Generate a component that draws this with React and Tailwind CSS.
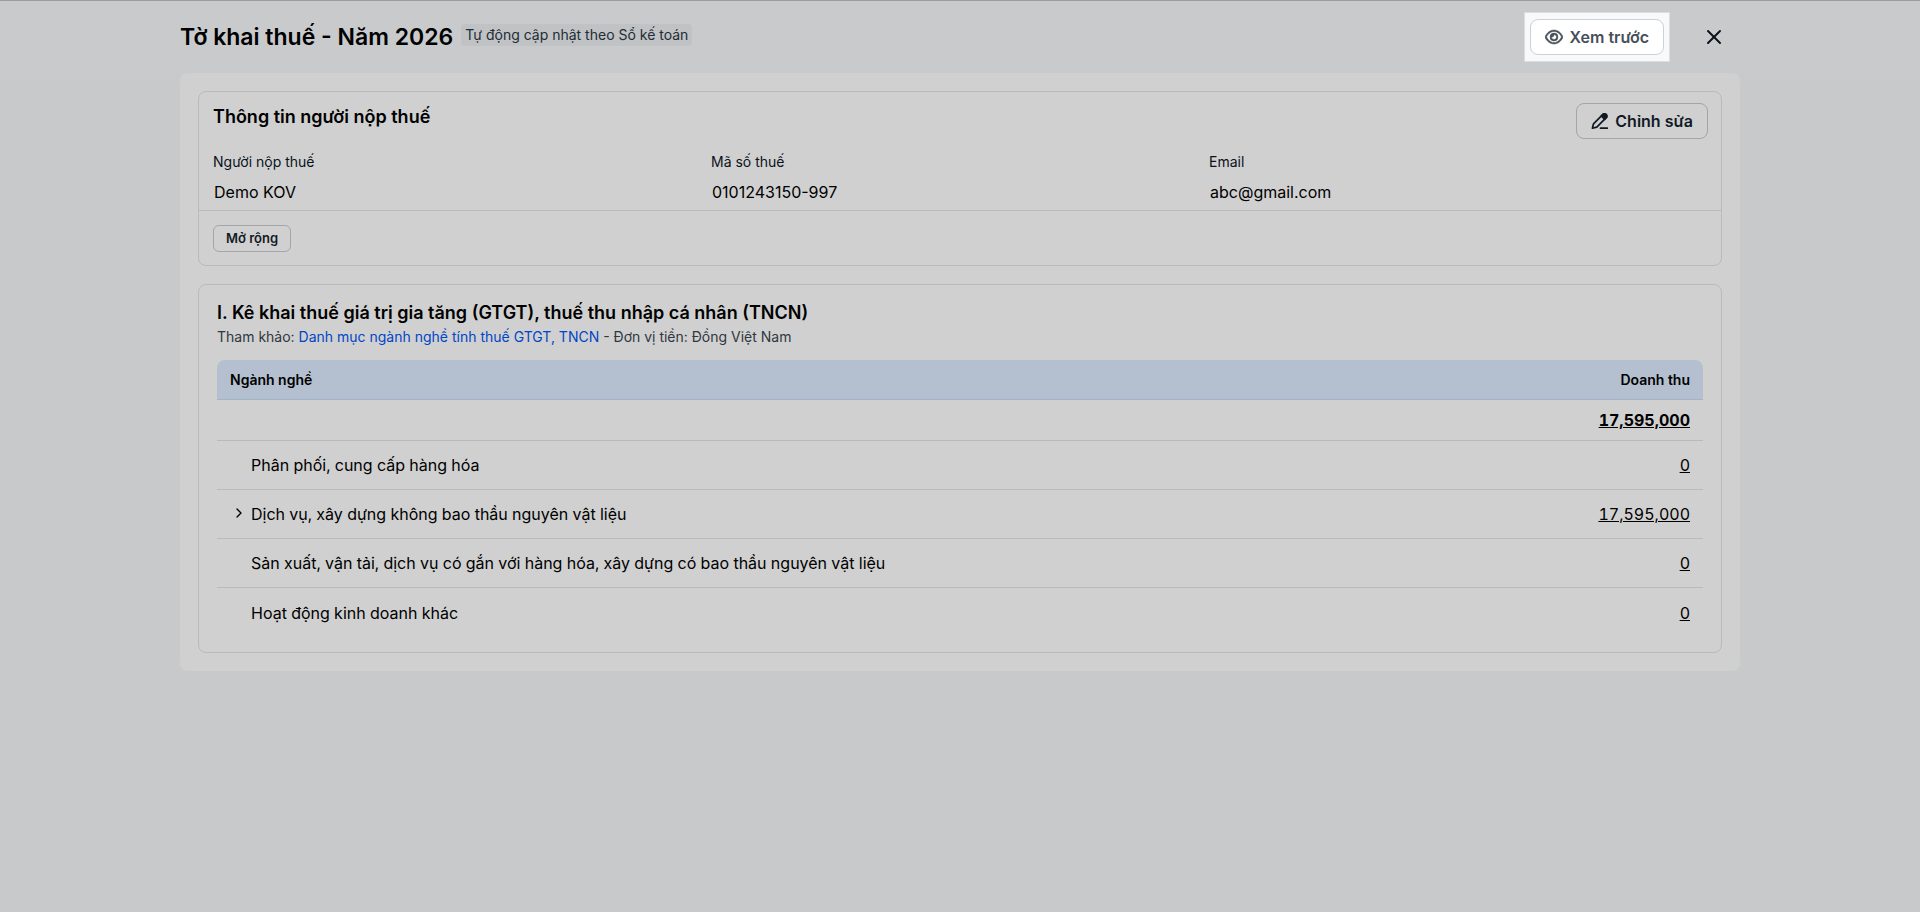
import { useState } from 'react';
import { X, ChevronRight } from 'lucide-react';
import { FaRegEye } from 'react-icons/fa6';

const taxpayer = [
  { id: 'name', label: 'Người nộp thuế', value: 'Demo KOV' },
  { id: 'taxCode', label: 'Mã số thuế', value: '0101243150-997' },
  { id: 'email', label: 'Email', value: 'abc@gmail.com' },
];

const rows = [
  { name: 'Phân phối, cung cấp hàng hóa', revenue: 0 },
  { name: 'Dịch vụ, xây dựng không bao thầu nguyên vật liệu', revenue: 17595000, expandable: true },
  { name: 'Sản xuất, vận tải, dịch vụ có gắn với hàng hóa, xây dựng có bao thầu nguyên vật liệu', revenue: 0 },
  { name: 'Hoạt động kinh doanh khác', revenue: 0 },
];

const format = (n) => n.toLocaleString('en-US');

function PenIcon() {
  return (
    <svg viewBox="0 0 18 18" className="size-[18px]" fill="none" stroke="currentColor" strokeWidth="1.7" strokeLinecap="round" strokeLinejoin="round">
      <path d="M1.400 16.200L2.500 11.800L11.900 2.400A2.100 2.100 0 0 1 14.900 2.400L15.200 2.700A2.100 2.100 0 0 1 15.200 5.700L5.800 15.100L1.400 16.200Z" />
      <path d="M10.300 4L11.900 2.400A2.100 2.100 0 0 1 14.900 2.400L15.200 2.700A2.100 2.100 0 0 1 15.200 5.700L13.600 7.300Z" fill="currentColor" />
      <path d="M9.500 16.200H16.300" />
    </svg>
  );
}

export default function App() {
  const [total] = useState(() => rows.reduce((sum, r) => sum + r.revenue, 0));

  return (
    <div className="min-h-screen bg-[#c8c9cb] text-black font-['Inter',sans-serif]">
      <header className="border-t border-[#9c9d9f] bg-[#c9cacc]">
        <div className="max-w-[1560px] mx-auto h-18 flex items-center justify-between">
          <div className="flex items-center gap-2">
            <h1 className="text-[23px] leading-8 font-semibold">Tờ khai thuế - Năm 2026</h1>
            <span className="mb-1 rounded bg-[#c0c2c4] px-1 text-sm leading-[22px] text-[#222d37]">Tự động cập nhật theo Sổ kế toán</span>
          </div>
          <div className="flex items-center gap-8 pr-3.5">
            <div className="border border-[#dcdddf] bg-[#f8f9fb] px-[5px] py-1.5">
              <button type="button" className="flex h-9 items-center gap-1.5 rounded-lg border border-[#cdd0d5] bg-white px-3.5 font-semibold text-[#474f59]">
                <FaRegEye size={18} className="stroke-current stroke-[16]" />
                Xem trước
              </button>
            </div>
            <button type="button" aria-label="Đóng" className="text-[#0b121b]">
              <X size={24} strokeWidth={2} />
            </button>
          </div>
        </div>
      </header>

      <main className="max-w-[1560px] mx-auto rounded-lg bg-[#d0d0d0] p-[18px]">
        <section className="rounded-lg border border-[#b9babc]">
          <div className="flex items-start justify-between pl-3.5 pr-[13px] pt-[11px]">
            <h2 className="text-lg leading-7 font-semibold">Thông tin người nộp thuế</h2>
            <button type="button" className="flex h-9 items-center gap-1.5 rounded-lg border border-[#a3a5a9] px-3.5 font-semibold text-[#111a24]">
              <PenIcon />
              Chỉnh sửa
            </button>
          </div>
          <div className="grid grid-cols-3 border-b border-[#b9babc] px-3.5 pt-[11px]">
            {taxpayer.map((f) => (
              <div key={f.id}>
                <label htmlFor={f.id} className="block text-sm leading-6 text-[#0b121b]">{f.label}</label>
                <input id={f.id} readOnly value={f.value} className="block h-9 w-full bg-transparent px-px outline-none" />
              </div>
            ))}
          </div>
          <div className="px-3.5 pt-3.5 pb-[13px]">
            <button type="button" className="flex h-[27px] items-center rounded-md border border-[#a3a5a9] px-3 text-[13px] font-semibold text-[#111a24]">Mở rộng</button>
          </div>
        </section>

        <section className="mt-[18px] rounded-lg border border-[#b9babc] px-[18px] pt-3.5 pb-[15px]">
          <h2 className="text-lg leading-7 font-semibold">I. Kê khai thuế giá trị gia tăng (GTGT), thuế thu nhập cá nhân (TNCN)</h2>
          <p className="text-sm leading-5 text-[#2f373f]">
            Tham khảo: <a href="#danh-muc" className="text-[#0046c7]">Danh mục ngành nghề tính thuế GTGT, TNCN</a> - Đơn vị tiền: Đồng Việt Nam
          </p>
          <table className="mt-[13px] w-full border-separate border-spacing-0">
            <thead>
              <tr className="h-10 text-sm">
                <th className="rounded-tl-lg border-b border-[#a1b3cb] bg-[#b4c0cf] px-[13px] text-left font-semibold">Ngành nghề</th>
                <th className="rounded-tr-lg border-b border-[#a1b3cb] bg-[#b4c0cf] px-[13px] text-right font-semibold">Doanh thu</th>
              </tr>
            </thead>
            <tbody className="tabular-nums">
              <tr className="h-[41px]">
                <td className="border-b border-[#b9babc]"></td>
                <td className="border-b border-[#b9babc] px-[13px] text-right">
                  <a href="#tong" className="font-bold underline">{format(total)}</a>
                </td>
              </tr>
              {rows.map((row) => (
                <tr key={row.name} className="group h-[49px]">
                  <td className="border-b border-[#b9babc] pl-3.5 group-last:border-b-0">
                    <div className="flex items-center gap-1">
                      <span className="w-4">
                        {row.expandable && (
                          <button type="button" aria-label="Mở rộng ngành nghề" className="block pb-0.5">
                            <ChevronRight size={16} strokeWidth={2} />
                          </button>
                        )}
                      </span>
                      {row.name}
                    </div>
                  </td>
                  <td className="border-b border-[#b9babc] px-[13px] text-right group-last:border-b-0">
                    <a href="#chi-tiet" className="underline">{format(row.revenue)}</a>
                  </td>
                </tr>
              ))}
            </tbody>
          </table>
        </section>
      </main>
    </div>
  );
}
